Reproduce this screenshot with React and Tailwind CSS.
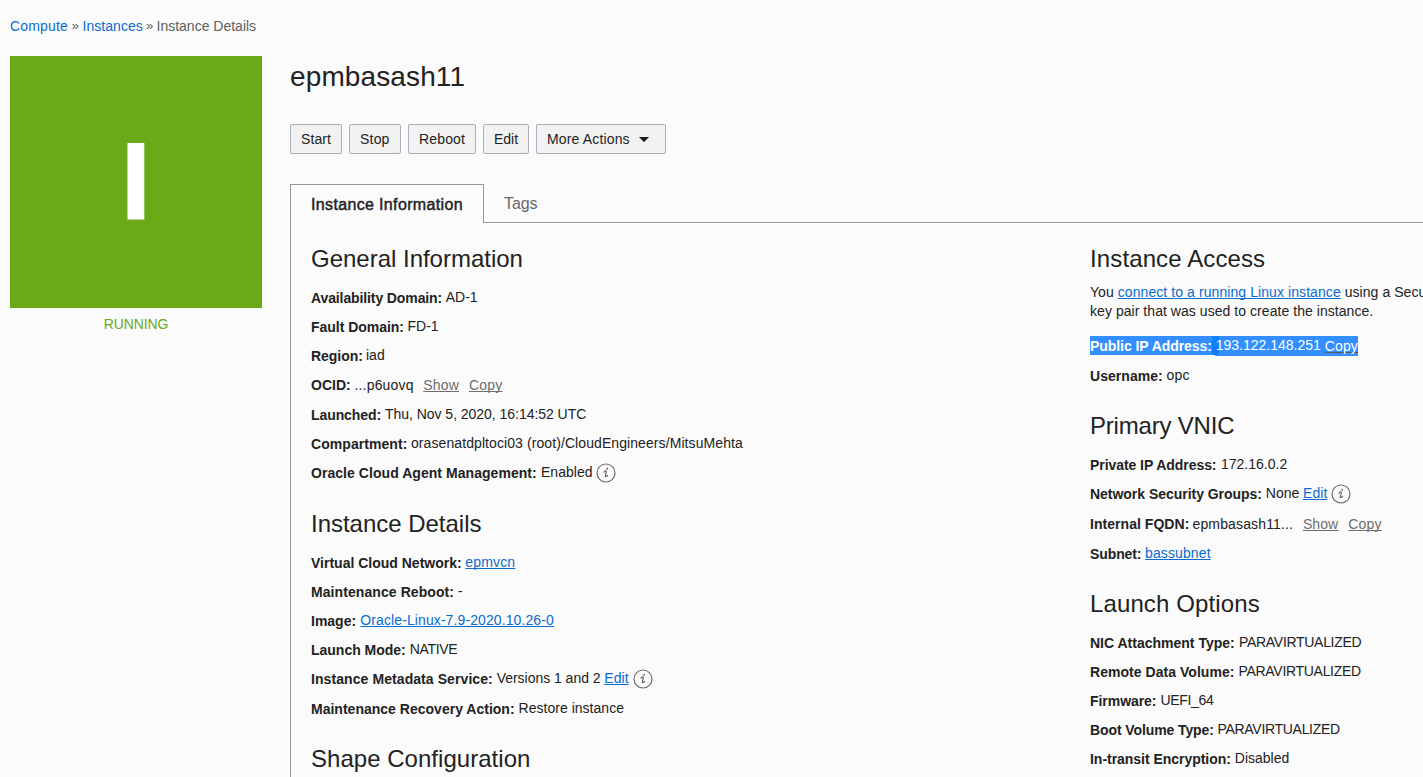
import React from "react";

const link = "text-[#0a6cce] underline decoration-1 underline-offset-[1px] [text-decoration-skip-ink:none]";
const mutedLink = "text-[#6e6e6e] underline decoration-1 underline-offset-[1px] [text-decoration-skip-ink:none]";

function InfoIcon({ className }) {
  return (
    <svg className={"size-5 shrink-0 " + className} viewBox="0 0 20 20" fill="none">
      <circle cx="10" cy="10" r="9" stroke="#6b6b6b" strokeWidth="1.15" />
      <path
        d="M8 9.1c.7-.8 1.6-1.3 2.1-1.1.4.15.35.6.2 1.1l-1 3.5c-.15.6-.1 1.1.4 1.1.6 0 1.3-.6 1.9-1.3"
        stroke="#666"
        strokeWidth="1.2"
        strokeLinecap="round"
        strokeLinejoin="round"
      />
      <circle cx="11.1" cy="5.7" r="0.95" fill="#666" />
    </svg>
  );
}

function Row({ label, labelClass, tall, children }) {
  return (
    <div className={"flex items-start whitespace-nowrap leading-5 " + (tall ? "h-[30px]" : "h-[29px]")}>
      <dt className={"shrink-0 font-bold " + labelClass}>{label}</dt>
      <dd className="flex items-start">{children}</dd>
    </div>
  );
}

function Value({ className = "", children }) {
  return <span className={"-mt-px " + className}>{children}</span>;
}

function Section({ title, titleClass, children }) {
  return (
    <section className="mb-[17px]">
      <h2 className={"h-[43px] whitespace-nowrap text-2xl leading-[27px] font-normal " + titleClass}>{title}</h2>
      <dl>{children}</dl>
    </section>
  );
}

function Button({ className, children }) {
  return (
    <button
      className={
        "flex h-[30px] items-center whitespace-nowrap rounded-[2px] border border-[#a9afba] bg-[#f2f2f2] pl-[10px] leading-5 " +
        className
      }
    >
      {children}
    </button>
  );
}

export default function App() {
  return (
    <div className="h-[777px] w-full overflow-hidden bg-[#fbfbfb] pl-[10px] font-['Liberation_Sans',Arial,sans-serif] text-sm text-[#222]">
      <nav className="flex h-14 items-start whitespace-nowrap pt-4 leading-5 text-[#5f5f5f]">
        <a className="w-[58px] tracking-[0.15px] text-[#0a6cce]">Compute</a>
        <span className="w-[14.5px] text-center text-[13px]">»</span>
        <a className="w-[60px] tracking-[0.05px] text-[#0a6cce]">Instances</a>
        <span className="w-[14px] text-center text-[13px]">»</span>
        <span>Instance Details</span>
      </nav>

      <div className="flex">
        <aside className="w-[252px] shrink-0">
          <div className="flex h-[252px] items-center justify-center bg-[#6aaa16] pb-[2px] text-[109px] leading-none font-bold text-white">
            <span className="[-webkit-text-stroke:1px_white]">I</span>
          </div>
          <p className="pt-[6px] text-center leading-5 tracking-[-0.1px] text-[#6aaa16]">RUNNING</p>
        </aside>

        <main className="ml-7 w-[1133px] shrink-0">
          <h1 className="h-[68px] pt-[5px] text-[28px] leading-8 font-normal tracking-[0.12px]">epmbasash11</h1>

          <div className="flex h-[60px] gap-[7px]">
            <Button className="w-[52px] tracking-[0.1px]">Start</Button>
            <Button className="w-[52px] tracking-[0.2px]">Stop</Button>
            <Button className="w-[68px] tracking-[0.15px]">Reboot</Button>
            <Button className="w-[46px]">Edit</Button>
            <Button className="w-[130px] tracking-[0.15px]">
              More Actions
              <svg className="ml-[9.6px] h-[5px] w-[10px]" viewBox="0 0 10 5">
                <path d="M0 0h10L5.7 4.6a1 1 0 0 1-1.4 0z" fill="#1d1d1d" />
              </svg>
            </Button>
          </div>

          <div className="flex h-[39px] text-base leading-5">
            <div className="w-[194px] border-x border-t border-[#979797] pt-[10px] pl-5 whitespace-nowrap tracking-[0.35px] [-webkit-text-stroke:0.45px_#222]">
              Instance Information
            </div>
            <div className="flex-1 border-b border-[#979797] pt-[10px] pl-5 tracking-[-0.1px] text-[#666]">Tags</div>
          </div>

          <div className="flex h-[600px] border-l border-[#979797] pt-[22px] pl-5">
            <div className="w-[779px] shrink-0">
              <Section title="General Information" titleClass="-ml-px pl-px tracking-[-0.01px]">
                <Row label="Availability Domain:" labelClass="w-[134.7px] tracking-[-0.11px]">
                  <Value>AD-1</Value>
                </Row>
                <Row label="Fault Domain:" labelClass="w-[96.5px] tracking-[-0.03px]">
                  <Value>FD-1</Value>
                </Row>
                <Row label="Region:" labelClass="w-[55px] tracking-[-0.05px]">
                  <Value>iad</Value>
                </Row>
                <Row label="OCID:" labelClass="w-[43.5px]" tall>
                  <span className="w-[68.8px] tracking-[0.17px]">...p6uovq</span>
                  <a className={"mr-[10px] tracking-[0.15px] " + mutedLink}>Show</a>
                  <a className={"tracking-[0.2px] " + mutedLink}>Copy</a>
                </Row>
                <Row label="Launched:" labelClass="w-[74px] tracking-[-0.08px]">
                  <Value className="tracking-[-0.035px]">Thu, Nov 5, 2020, 16:14:52 UTC</Value>
                </Row>
                <Row label="Compartment:" labelClass="w-[100px] tracking-[0.06px]">
                  <Value className="tracking-[0.085px]">orasenatdpltoci03 (root)/CloudEngineers/MitsuMehta</Value>
                </Row>
                <Row label="Oracle Cloud Agent Management:" labelClass="w-[230px] tracking-[0.05px]" tall>
                  <Value className="w-[55px] tracking-[0.02px]">Enabled</Value>
                  <InfoIcon className="" />
                </Row>
              </Section>

              <Section title="Instance Details" titleClass="tracking-[-0.02px]">
                <Row label="Virtual Cloud Network:" labelClass="w-[154.3px]">
                  <Value className={"tracking-[0.16px] " + link}>epmvcn</Value>
                </Row>
                <Row label="Maintenance Reboot:" labelClass="w-[147px] tracking-[0.08px]">
                  <Value>-</Value>
                </Row>
                <Row label="Image:" labelClass="w-[49.3px]">
                  <Value className={"tracking-[0.1px] " + link}>Oracle-Linux-7.9-2020.10.26-0</Value>
                </Row>
                <Row label="Launch Mode:" labelClass="w-[98.8px] tracking-[-0.01px]">
                  <Value className="tracking-[-0.35px]">NATIVE</Value>
                </Row>
                <Row label="Instance Metadata Service:" labelClass="w-[185.7px] tracking-[0.08px]" tall>
                  <Value className="w-[107.6px] tracking-[-0.03px]">Versions 1 and 2</Value>
                  <Value className={"tracking-[0.07px] " + link}>Edit</Value>
                  <InfoIcon className="ml-[4.3px]" />
                </Row>
                <Row label="Maintenance Recovery Action:" labelClass="w-[207.6px] tracking-[0.01px]">
                  <Value className="tracking-[0.02px]">Restore instance</Value>
                </Row>
              </Section>

              <Section title="Shape Configuration" titleClass="tracking-[0.03px]" />
            </div>

            <div className="w-[333px] shrink-0">
              <section className="mb-[17px]">
                <h2 className="h-[38px] text-2xl leading-[27px] font-normal whitespace-nowrap tracking-[0.12px]">
                  Instance Access
                </h2>
                <p className="h-[53px] leading-[19px] whitespace-nowrap tracking-[0.05px]">
                  You <a className={"tracking-[0.08px] " + link}>connect to a running Linux instance</a> using a Secu
                  <br />
                  key pair that was used to create the instance.
                </p>
                <dl>
                  <div className="flex h-[30px] items-start leading-5 whitespace-nowrap text-white">
                    <dt className="h-[19px] w-[122px] bg-[#338fff] font-bold tracking-[-0.06px]">Public IP Address:</dt>
                    <dd className="flex h-5 items-start">
                      <span className="h-[19px] w-[3px] bg-[#0f7ffa]" />
                      <span className="relative flex h-5 w-[143px] bg-[#338fff]">
                        <span className="absolute top-0 left-0 h-[19px] w-1 bg-[#0f7ffa]" />
                        <Value className="relative w-[109.7px] pl-[0.7px]">193.122.148.251</Value>
                        <a className="tracking-[0.15px] underline decoration-[#5c5c5c] decoration-1 underline-offset-[1px] [text-decoration-skip-ink:none]">
                          Copy
                        </a>
                      </span>
                    </dd>
                  </div>
                  <Row label="Username:" labelClass="w-[76.4px] tracking-[0.05px]">
                    <Value className="tracking-[0.3px]">opc</Value>
                  </Row>
                </dl>
              </section>

              <Section title="Primary VNIC" titleClass="tracking-[-0.2px]">
                <Row label="Private IP Address:" labelClass="w-[131px] tracking-[-0.06px]">
                  <Value>172.16.0.2</Value>
                </Row>
                <Row label="Network Security Groups:" labelClass="w-[175.8px] tracking-[-0.03px]" tall>
                  <Value className="w-[37.2px]">None</Value>
                  <Value className={"tracking-[0.07px] " + link}>Edit</Value>
                  <InfoIcon className="ml-[3.6px]" />
                </Row>
                <Row label="Internal FQDN:" labelClass="w-[102.5px] tracking-[0.04px]" tall>
                  <span className="w-[110.4px] tracking-[0.14px]">epmbasash11...</span>
                  <a className={"mr-[10px] tracking-[0.1px] " + mutedLink}>Show</a>
                  <a className={"tracking-[0.2px] " + mutedLink}>Copy</a>
                </Row>
                <Row label="Subnet:" labelClass="w-[55px] tracking-[-0.1px]">
                  <Value className={"tracking-[0.12px] " + link}>bassubnet</Value>
                </Row>
              </Section>

              <Section title="Launch Options" titleClass="tracking-[0.12px]">
                <Row label="NIC Attachment Type:" labelClass="w-[149px]">
                  <Value className="tracking-[-0.3px]">PARAVIRTUALIZED</Value>
                </Row>
                <Row label="Remote Data Volume:" labelClass="w-[148.5px] tracking-[0.04px]">
                  <Value className="tracking-[-0.3px]">PARAVIRTUALIZED</Value>
                </Row>
                <Row label="Firmware:" labelClass="w-[70.4px] tracking-[-0.05px]">
                  <Value className="tracking-[-0.3px]">UEFI_64</Value>
                </Row>
                <Row label="Boot Volume Type:" labelClass="w-[127.5px] tracking-[-0.1px]">
                  <Value className="tracking-[-0.3px]">PARAVIRTUALIZED</Value>
                </Row>
                <Row label="In-transit Encryption:" labelClass="w-[144.8px] tracking-[-0.03px]">
                  <Value>Disabled</Value>
                </Row>
              </Section>
            </div>
          </div>
        </main>
      </div>
    </div>
  );
}
